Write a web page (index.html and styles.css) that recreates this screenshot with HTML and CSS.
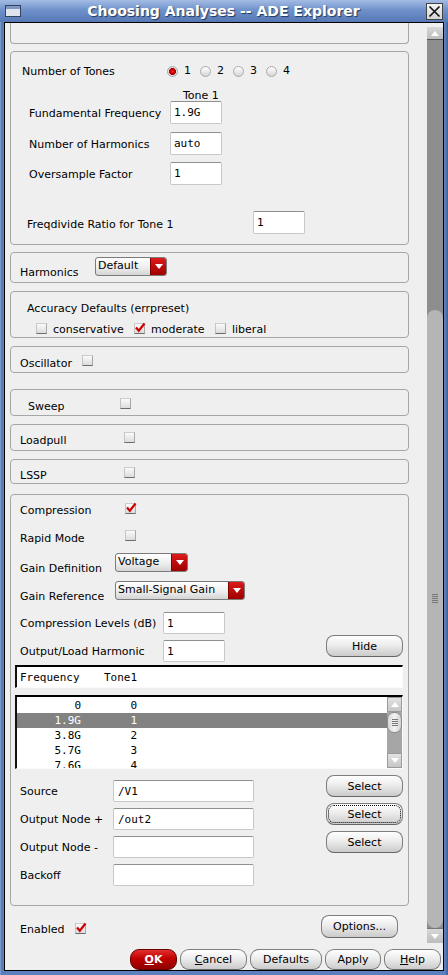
FILE: index.html
```html
<!DOCTYPE html>
<html>
<head>
<meta charset="utf-8">
<title>Choosing Analyses -- ADE Explorer</title>
<link rel="stylesheet" href="styles.css">
</head>
<body>
<div class="window">
  <div class="titlebar">
    <svg class="ticon" width="16" height="12" viewBox="0 0 16 12"><rect x="0.5" y="0.5" width="15" height="11" fill="#dfe4ec" stroke="#34445f"/><rect x="1" y="1" width="14" height="3" fill="#7f98c2"/></svg>
    <span class="title">Choosing Analyses -- ADE Explorer</span>
    <span class="close"><svg width="15" height="15" viewBox="0 0 15 15"><path d="M2.5 2.5L12.5 12.5M12.5 2.5L2.5 12.5" stroke="#111" stroke-width="1.6"/></svg></span>
  </div>
  <div class="client">
    <div class="main">
      <div class="content">
        <div class="frame f0"></div>

        <div class="frame f-tones">
          <div class="row tones">
            <span class="lbl">Number of Tones</span>
            <span class="radio-item"><span class="radio on"></span>1</span>
            <span class="radio-item"><span class="radio"></span>2</span>
            <span class="radio-item"><span class="radio"></span>3</span>
            <span class="radio-item"><span class="radio"></span>4</span>
          </div>
          <div class="tonehdr">Tone 1</div>
          <div class="row field fd1"><span class="lbl">Fundamental Frequency</span><span class="in in-tone">1.9G</span></div>
          <div class="row field fd2"><span class="lbl">Number of Harmonics</span><span class="in in-tone">auto</span></div>
          <div class="row field fd3"><span class="lbl">Oversample Factor</span><span class="in in-tone">1</span></div>
          <div class="row freqdiv"><span class="lbl">Freqdivide Ratio for Tone 1</span><span class="in in-tone">1</span></div>
        </div>

        <div class="frame f-harm">
          <div class="row harm">
            <span class="lbl">Harmonics</span>
            <span class="combo combo-harm"><span class="combo-txt">Default</span><span class="combo-btn"><svg width="8" height="5" viewBox="0 0 8 5"><path d="M0 0H8L4 5Z" fill="#fff"/></svg></span></span>
          </div>
        </div>

        <div class="frame f-acc">
          <div class="acc-title">Accuracy Defaults (errpreset)</div>
          <div class="acc-opts">
            <span class="opt opt-cons"><span class="cb"></span>conservative</span>
            <span class="opt opt-mod"><span class="cb"><svg class="chk" width="12" height="12" viewBox="0 0 12 12"><path d="M2 5.5L4.8 8.8L10.5 1.5" fill="none" stroke="#d00000" stroke-width="2.2"/></svg></span>moderate</span>
            <span class="opt"><span class="cb"></span>liberal</span>
          </div>
        </div>

        <div class="frame f-osc">
          <div class="cbrow osc"><span class="lbl">Oscillator</span><span class="cb"></span></div>
        </div>

        <div class="frame f-sweep">
          <div class="cbrow sweep"><span class="lbl">Sweep</span><span class="cb"></span></div>
        </div>

        <div class="frame f-lp">
          <div class="cbrow lp"><span class="lbl">Loadpull</span><span class="cb"></span></div>
        </div>

        <div class="frame f-lssp">
          <div class="cbrow lp"><span class="lbl">LSSP</span><span class="cb"></span></div>
        </div>

        <div class="frame f-comp">
          <div class="cbrow c1"><span class="lbl">Compression</span><span class="cb"><svg class="chk" width="12" height="12" viewBox="0 0 12 12"><path d="M2 5.5L4.8 8.8L10.5 1.5" fill="none" stroke="#d00000" stroke-width="2.2"/></svg></span></div>
          <div class="cbrow c2"><span class="lbl">Rapid Mode</span><span class="cb"></span></div>
          <div class="row crow gdef">
            <span class="lbl">Gain Definition</span>
            <span class="combo combo-gdef"><span class="combo-txt">Voltage</span><span class="combo-btn"><svg width="8" height="5" viewBox="0 0 8 5"><path d="M0 0H8L4 5Z" fill="#fff"/></svg></span></span>
          </div>
          <div class="row crow gref">
            <span class="lbl">Gain Reference</span>
            <span class="combo combo-gref"><span class="combo-txt">Small-Signal Gain</span><span class="combo-btn"><svg width="8" height="5" viewBox="0 0 8 5"><path d="M0 0H8L4 5Z" fill="#fff"/></svg></span></span>
          </div>
          <div class="row clev"><span class="lbl">Compression Levels (dB)</span><span class="in in-comp">1</span></div>
          <div class="row olh"><span class="lbl">Output/Load Harmonic</span><span class="in in-comp">1</span><span class="btn btn-side">Hide</span></div>

          <div class="tblhdr"><span class="h1">Frequency</span><span class="h2">Tone1</span></div>
          <div class="tbllist">
            <div class="rows">
              <div class="trow"><span class="c1c">0</span><span class="c2c">0</span></div>
              <div class="trow sel"><span class="c1c">1.9G</span><span class="c2c">1</span></div>
              <div class="trow"><span class="c1c">3.8G</span><span class="c2c">2</span></div>
              <div class="trow"><span class="c1c">5.7G</span><span class="c2c">3</span></div>
              <div class="trow"><span class="c1c">7.6G</span><span class="c2c">4</span></div>
            </div>
            <div class="lscroll">
              <div class="ls-arrow"><svg width="8" height="5" viewBox="0 0 8 5"><path d="M0 5H8L4 0Z" fill="#fff"/></svg></div>
              <div class="ls-thumb"><span class="grip small"></span></div>
              <div class="ls-track"></div>
              <div class="ls-arrow down"><svg width="8" height="5" viewBox="0 0 8 5"><path d="M0 0H8L4 5Z" fill="#fff"/></svg></div>
            </div>
          </div>

          <div class="row nrow first"><span class="lbl">Source</span><span class="in in-node">/V1</span><span class="btn btn-side">Select</span></div>
          <div class="row nrow"><span class="lbl">Output Node +</span><span class="in in-node">/out2</span><span class="btn btn-side focus">Select</span></div>
          <div class="row nrow"><span class="lbl">Output Node -</span><span class="in in-node"></span><span class="btn btn-side">Select</span></div>
          <div class="row nrow"><span class="lbl">Backoff</span><span class="in in-node"></span></div>
        </div>

        <div class="row enabled">
          <span class="lbl">Enabled</span>
          <span class="cb"><svg class="chk" width="12" height="12" viewBox="0 0 12 12"><path d="M2 5.5L4.8 8.8L10.5 1.5" fill="none" stroke="#d00000" stroke-width="2.2"/></svg></span>
          <span class="btn btn-opt">Options...</span>
        </div>
      </div>

      <div class="vscroll">
        <div class="vs-arrow"><svg width="8" height="5" viewBox="0 0 8 5"><path d="M0 5H8L4 0Z" fill="#fff"/></svg></div>
        <div class="vs-trough"><div class="vs-thumb"><span class="grip"></span></div></div>
        <div class="vs-arrow down"><svg width="8" height="5" viewBox="0 0 8 5"><path d="M0 0H8L4 5Z" fill="#fff"/></svg></div>
      </div>
    </div>

    <div class="buttons">
      <span class="btn bb ok"><u>O</u>K</span>
      <span class="btn bb b-cancel"><u>C</u>ancel</span>
      <span class="btn bb b-def">Defaults</span>
      <span class="btn bb b-apply">Apply</span>
      <span class="btn bb b-help"><u>H</u>elp</span>
    </div>
  </div>
</div>
</body>
</html>
```

FILE: styles.css
```css
* { box-sizing: border-box; }
html, body { margin: 0; padding: 0; }
body {
  width: 448px;
  height: 975px;
  overflow: hidden;
  font-family: "DejaVu Sans", "Liberation Sans", sans-serif;
  font-size: 11px;
  color: #000;
  background: #5b80bd;
}
.window {
  width: 448px;
  height: 975px;
  display: flex;
  flex-direction: column;
  background: linear-gradient(to right, #86a4d6 0, #4f73ad 2px, #5b80bd 3px, #5b80bd 445px, #3c5e96 448px);
}

/* title bar */
.titlebar {
  height: 22px;
  flex-shrink: 0;
  display: flex;
  align-items: center;
  padding: 0 5px;
  background: linear-gradient(#a4bce4, #6f91cb 45%, #5679b6);
}
.ticon { flex-shrink: 0; margin-top: -1px; }
.title {
  flex: 1;
  text-align: center;
  color: #fff;
  font-weight: bold;
  font-size: 14px;
  line-height: 16px;
  text-shadow: 1px 1px 1px #24385c;
}
.close {
  width: 17px;
  height: 17px;
  flex-shrink: 0;
  display: flex;
  align-items: center;
  justify-content: center;
  border: 1px solid #444;
  background: linear-gradient(#f4f4f4, #d4d4d4);
}

/* client */
.client {
  flex: 1;
  margin: 0 4px 4px;
  border: 1px solid #000;
  background: #efefef;
  display: flex;
  flex-direction: column;
}
.main { height: 922px; display: flex; flex-shrink: 0; }
.content {
  width: 422px;
  flex-shrink: 0;
  display: flex;
  flex-direction: column;
  overflow: hidden;
}

.frame {
  margin-left: 5px;
  width: 399px;
  border: 1px solid #a6a6a6;
  border-radius: 4px;
  flex-shrink: 0;
}
.f0 { height: 21px; border-top: none; border-radius: 0 0 4px 4px; }
.f-tones { margin-top: 7px; height: 194px; }
.f-harm { margin-top: 7px; height: 31px; }
.f-acc { margin-top: 8px; height: 47px; }
.f-osc { margin-top: 8px; height: 27px; }
.f-sweep { margin-top: 16px; height: 27px; }
.f-lp { margin-top: 8px; height: 27px; }
.f-lssp { margin-top: 8px; height: 25px; }
.f-comp { margin-top: 10px; height: 412px; display: flex; flex-direction: column; }

.row { display: flex; align-items: flex-start; flex-shrink: 0; }
.lbl { line-height: 14px; padding-top: 2px; white-space: nowrap; flex-shrink: 0; }

/* tones */
.tones { margin-top: 9px; height: 20px; padding-left: 11px; align-items: center; }
.tones .lbl { width: 145px; }
.radio-item { display: flex; align-items: center; width: 33px; line-height: 14px; }
.radio {
  width: 11px;
  height: 11px;
  border-radius: 50%;
  border: 1px solid #a9a9a9;
  background: linear-gradient(#ffffff, #d6d6d6);
  margin-right: 6px;
  flex-shrink: 0;
}
.radio.on {
  background: radial-gradient(circle at 50% 50%, #ff3030 0, #dd0000 1.6px, #a80000 3.2px, #e8e8e8 3.8px, #cfcfcf 100%);
}
.tonehdr { margin-top: 6px; height: 14px; line-height: 18px; padding-left: 172px; }
.field { padding-left: 18px; align-items: center; }
.field .lbl { width: 141px; }
.fd2 { margin-top: 8px; }
.fd3 { margin-top: 7px; }
.freqdiv { margin-top: 26px; padding-left: 16px; align-items: center; }
.freqdiv .lbl { width: 226px; padding-top: 5px; }

.in {
  background: #fff;
  border: 1px solid #c8c8c8;
  border-top-color: #8f8f8f;
  border-radius: 2px;
  font-family: "DejaVu Sans Mono", "Liberation Mono", monospace;
  font-size: 11px;
  padding: 0 3px;
  display: flex;
  align-items: center;
  flex-shrink: 0;
}
.in-tone { width: 52px; height: 23px; }
.in-comp { width: 62px; height: 22px; }
.in-node { width: 141px; height: 22px; padding-left: 4px; }

/* combo */
.combo {
  height: 19px;
  display: flex;
  border: 1px solid #7b7b7b;
  border-radius: 3px;
  background: linear-gradient(#ffffff, #eeeeee 55%, #d4d4d4);
  overflow: hidden;
  flex-shrink: 0;
}
.combo-txt { flex: 1; padding-left: 2px; line-height: 15px; white-space: nowrap; }
.combo-btn {
  width: 16px;
  flex-shrink: 0;
  background: linear-gradient(#dc1a1a, #a00000);
  border-left: 1px solid #800000;
  display: flex;
  align-items: center;
  justify-content: center;
}
.combo-harm { width: 72px; }
.combo-gdef { width: 73px; }
.combo-gref { width: 130px; }

.harm { margin-top: 4px; padding-left: 9px; height: 21px; }
.harm .lbl { width: 75px; margin-top: 7px; }

/* accuracy */
.acc-title { margin-top: 8px; padding: 2px 0 0 16px; line-height: 14px; }
.acc-opts { margin-top: 6px; padding-left: 25px; display: flex; align-items: flex-start; height: 15px; }
.opt { display: flex; align-items: flex-start; line-height: 14px; padding-top: 1px; }
.opt .cb { margin-right: 6px; }
.opt-cons { width: 98px; }
.opt-mod { width: 81px; }

/* checkbox */
.cb {
  width: 11px;
  height: 11px;
  flex-shrink: 0;
  position: relative;
  border: 1px solid;
  border-color: #cdcdcd #a8a8a8 #6c6c6c #c4c4c4;
  background: linear-gradient(#fafafa, #dcdcdc);
}
.chk { position: absolute; left: -1px; top: -2px; }

.cbrow { display: flex; align-items: flex-start; padding-left: 9px; margin-top: 8px; height: 14px; flex-shrink: 0; }
.osc .lbl { width: 62px; }
.sweep { padding-left: 17px; }
.sweep .lbl { width: 92px; }
.lp { margin-top: 7px; }
.lp .lbl { width: 104px; }
.c1 { margin-top: 7px; }
.c1 .lbl, .c2 .lbl { width: 105px; }
.c1 .cb { margin-top: 1px; }
.c2 { margin-top: 14px; }

.crow { padding-left: 9px; height: 21px; }
.crow .lbl { width: 95px; margin-top: 7px; }
.gdef { margin-top: 9px; }
.gref { margin-top: 7px; }
.clev { margin-top: 10px; padding-left: 9px; height: 22px; align-items: center; }
.clev .lbl, .olh .lbl { width: 143px; }
.olh { margin-top: 1px; padding-left: 9px; height: 27px; align-items: flex-end; }
.olh .lbl { margin-bottom: 3px; }

/* buttons */
.btn {
  display: flex;
  align-items: center;
  justify-content: center;
  flex-shrink: 0;
  border: 1px solid #7e7e7e;
  border-bottom-color: #666;
  border-radius: 8px;
  background: linear-gradient(#ffffff, #ececec 45%, #cbcbcb);
  white-space: nowrap;
}
.btn-side {
  width: 77px;
  height: 22px;
  margin-left: auto;
  margin-right: 5px;
  align-self: flex-start;
}
.btn.focus { outline: 1px dotted #000; outline-offset: -3px; }
.btn-opt { width: 77px; height: 23px; margin-left: auto; margin-right: 29px; }

/* table */
.tblhdr {
  margin: 3px 5px 0 4px;
  height: 23px;
  flex-shrink: 0;
  background: #fff;
  border-top: 2px solid #000;
  border-left: 2px solid #111;
  border-right: 1px solid #fafafa;
  border-bottom: 1px solid #fafafa;
  display: flex;
  align-items: center;
  font-family: "DejaVu Sans Mono", "Liberation Mono", monospace;
  font-size: 11px;
  padding-left: 3px;
}
.h1 { width: 84px; }
.tbllist {
  margin: 7px 5px 0 4px;
  height: 74px;
  flex-shrink: 0;
  background: #fff;
  border-top: 2px solid #000;
  border-left: 2px solid #111;
  border-right: 1px solid #fafafa;
  border-bottom: 1px solid #fafafa;
  display: flex;
  overflow: hidden;
  font-family: "DejaVu Sans Mono", "Liberation Mono", monospace;
  font-size: 11px;
}
.rows { flex: 1; padding-top: 1px; }
.trow { height: 15px; line-height: 15px; display: flex; }
.trow.sel { background: #828282; color: #fff; }
.c1c { width: 64px; text-align: right; }
.c2c { width: 56px; text-align: right; }
.lscroll { width: 15px; display: flex; flex-direction: column; background: #a6a6a6; }
.ls-arrow {
  height: 15px;
  display: flex;
  align-items: center;
  justify-content: center;
  background: linear-gradient(#e2e2e2, #c6c6c6);
  border: 1px solid #9a9a9a;
}
.ls-thumb {
  height: 21px;
  border: 1px solid #8c8c8c;
  border-radius: 7px;
  background: linear-gradient(to right, #d8d8d8, #f2f2f2 50%, #d0d0d0);
  display: flex;
  align-items: center;
  justify-content: center;
}
.ls-track { height: 20px; }

.nrow { margin-top: 1px; padding-left: 9px; height: 27px; align-items: flex-end; }
.nrow.first { margin-top: 6px; }
.nrow .lbl { width: 93px; margin-bottom: 3px; }

.enabled { margin-top: 9px; height: 23px; padding-left: 15px; flex-shrink: 0; }
.enabled .lbl { width: 55px; margin-top: 6px; }
.enabled .cb { margin-top: 8px; }

/* vertical scrollbar */
.vscroll { width: 16px; flex-shrink: 0; padding-top: 4px; display: flex; flex-direction: column; }
.vs-arrow {
  height: 13px;
  flex-shrink: 0;
  display: flex;
  align-items: center;
  justify-content: center;
  background: linear-gradient(#d8d8d8, #bcbcbc);
  border-bottom: 1px solid #555;
}
.vs-arrow.down { height: 15px; border-bottom: none; border-top: 1px solid #777; }
.vs-trough { height: 888px; background: #8e8e8e; padding-top: 270px; flex-shrink: 0; }
.vs-thumb {
  height: 618px;
  border-radius: 8px;
  background: #b5b5b5;
  display: flex;
  align-items: center;
  justify-content: center;
  padding-bottom: 40px;
}
.grip {
  width: 6px;
  height: 10px;
  background: repeating-linear-gradient(#777 0, #777 1px, transparent 1px, transparent 2px);
}
.grip.small { width: 6px; height: 7px; }

/* bottom buttons */
.buttons {
  height: 25px;
  flex-shrink: 0;
  display: flex;
  justify-content: flex-end;
  gap: 3px;
  padding: 4px 2px 0 0;
}
.bb { height: 21px; border-radius: 9px; }
.ok {
  width: 47px;
  color: #fff;
  font-weight: bold;
  border-color: #6a0000;
  background: linear-gradient(#e23030, #c00000 45%, #8e0000);
}
.b-cancel { width: 67px; }
.b-def { width: 72px; }
.b-apply { width: 56px; }
.b-help { width: 57px; }
```
